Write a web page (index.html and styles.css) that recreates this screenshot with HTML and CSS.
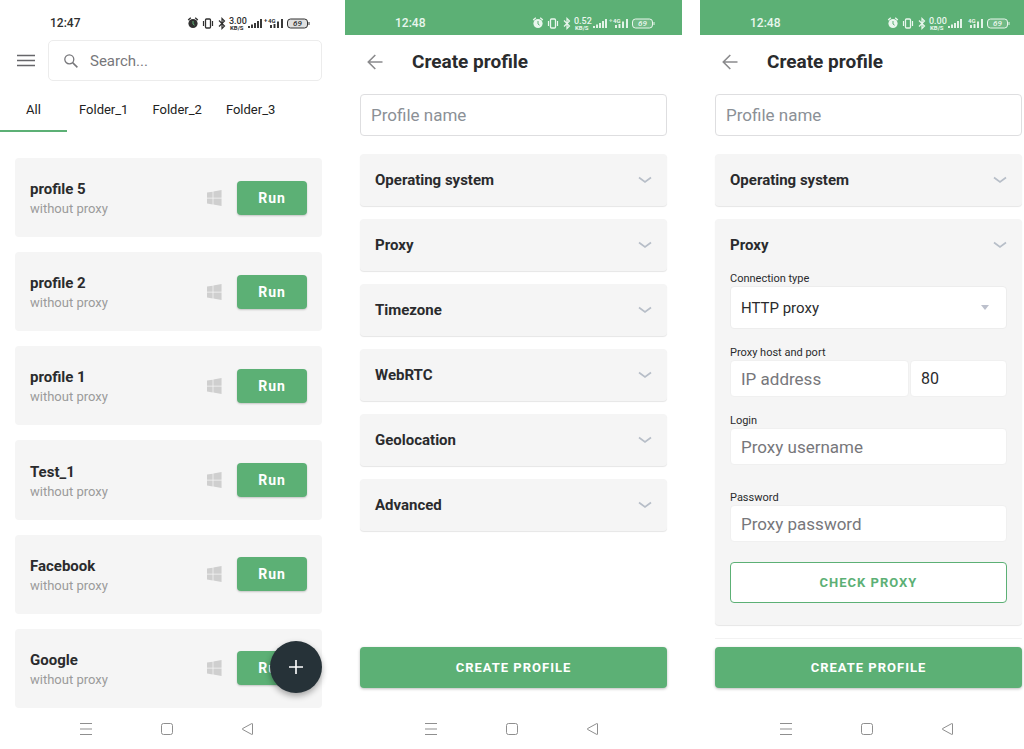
FILE: index.html
```html
<!DOCTYPE html>
<html lang="en">
<head>
<meta charset="utf-8">
<meta name="viewport" content="width=device-width, initial-scale=1">
<title>Profiles</title>
<link rel="stylesheet" href="styles.css">
</head>
<body>
<svg class="sprite" aria-hidden="true">
  <symbol id="status" viewBox="0 0 124 16">
    <g fill="none" stroke="currentColor">
      <circle cx="6" cy="8.5" r="4.6" fill="currentColor" stroke="none"/>
      <path d="M1.2 5 3.8 2.8M10.8 5 8.2 2.8" stroke-width="1.4"/>
      <path class="hands" d="M6 6v3l1.6 1.2" stroke-width="1"/>
      <rect x="18.500" y="4" width="5" height="9" rx="1" stroke-width="1.300"/>
      <path d="M16.500 6v5M25.500 6v5" stroke-width="1.200"/>
      <path d="M32 5.500 37.500 11 35 13.500V3.500L37.500 6 32 11.500" stroke-width="1.200"/>
      <path d="M62 11v2M65 9.500V13M68 8v5M71 6v7M74 4v9" stroke-width="1.900"/>
      <path d="M84 10v3M87.500 9v4M91 6.500V13M95 4v9" stroke-width="1.900"/>
      <path class="cell" d="M103.500 4h14q3 0 3 3v3q0 3-3 3h-14q-3 0-3-3V7q0-3 3-3z"/>
      <path d="M122 7v3"/>
    </g>
  </symbol>
  <symbol id="windows" viewBox="0 0 16 18">
    <path fill="currentColor" d="M0 3.200 6 2.200V8.600H0zM6.800 2 15.500.4V8.600H6.800zM0 9.400H6V15.800L0 14.800zM6.800 9.400H15.500V17.600L6.800 16z"/>
  </symbol>
  <symbol id="chevron" viewBox="0 0 14 8">
    <path d="M1 1.500 7 6 13 1.500" fill="none" stroke="currentColor" stroke-width="1.600"/>
  </symbol>
  <symbol id="back" viewBox="0 0 16 16">
    <path d="M15.500 8H1.500M8.300 1 1.300 8l7 7" fill="none" stroke="currentColor" stroke-width="1.600"/>
  </symbol>
  <symbol id="recents" viewBox="0 0 14 14">
    <path d="M1 1.500H13M1 7H13M1 12.500H13" fill="none" stroke="currentColor"/>
  </symbol>
  <symbol id="home" viewBox="0 0 14 14">
    <rect x="1.500" y="1.500" width="11" height="11" rx="2" fill="none" stroke="currentColor"/>
  </symbol>
  <symbol id="return" viewBox="0 0 14 14">
    <path d="M11.500 2v10q0 .8-.8.400L1.500 7.400q-.6-.4 0-.8L10.700 1.600q.8-.4.8.4z" fill="none" stroke="currentColor"/>
  </symbol>
</svg>

<main class="screens">
  <section class="phone">
    <header class="status status-light">
      <time>12:47</time>
      <svg class="status-icons" viewBox="0 0 124 16"><use href="#status"/><text x="42" y="9" class="speed">3.00</text><text x="43" y="15" class="unit">KB/S</text><text x="77" y="7" class="unit">+</text><text x="81" y="8" class="unit">4G</text><text x="106" y="11" class="level">69</text></svg>
    </header>
    <div class="search-row">
      <button class="icon-button menu" aria-label="Menu"><svg viewBox="0 0 18 14"><path d="M0 1.500H18M0 6.500H18M0 11.500H18" stroke="currentColor" stroke-width="1.600"/></svg></button>
      <label class="search">
        <svg viewBox="0 0 14 14"><circle cx="5.300" cy="5.300" r="4.500" fill="none" stroke="currentColor" stroke-width="1.300"/><path d="M8.600 8.600 13.400 13.400" stroke="currentColor" stroke-width="1.500"/></svg>
        <input type="search" placeholder="Search..." aria-label="Search">
      </label>
    </div>
    <nav class="tabs">
      <button class="tab tab-active">All</button>
      <button class="tab">Folder_1</button>
      <button class="tab">Folder_2</button>
      <button class="tab">Folder_3</button>
    </nav>
    <div class="profiles">
      <article class="profile"><div class="profile-text"><h2>profile 5</h2><p>without proxy</p></div><svg class="os"><use href="#windows"/></svg><button class="run">Run</button></article>
      <article class="profile"><div class="profile-text"><h2>profile 2</h2><p>without proxy</p></div><svg class="os"><use href="#windows"/></svg><button class="run">Run</button></article>
      <article class="profile"><div class="profile-text"><h2>profile 1</h2><p>without proxy</p></div><svg class="os"><use href="#windows"/></svg><button class="run">Run</button></article>
      <article class="profile"><div class="profile-text"><h2>Test_1</h2><p>without proxy</p></div><svg class="os"><use href="#windows"/></svg><button class="run">Run</button></article>
      <article class="profile"><div class="profile-text"><h2>Facebook</h2><p>without proxy</p></div><svg class="os"><use href="#windows"/></svg><button class="run">Run</button></article>
      <article class="profile"><div class="profile-text"><h2>Google</h2><p>without proxy</p></div><svg class="os"><use href="#windows"/></svg><button class="run">Run</button></article>
      <button class="fab" aria-label="Add profile"><svg viewBox="0 0 14 14"><path d="M7 0V14M0 7H14" stroke="currentColor" stroke-width="1.600"/></svg></button>
    </div>
    <footer class="system-nav"><svg><use href="#recents"/></svg><svg><use href="#home"/></svg><svg><use href="#return"/></svg></footer>
  </section>

  <section class="phone phone-middle">
    <header class="status">
      <time>12:48</time>
      <svg class="status-icons" viewBox="0 0 124 16"><use href="#status"/><text x="42" y="9" class="speed">0.52</text><text x="43" y="15" class="unit">KB/S</text><text x="77" y="7" class="unit">÷</text><text x="81" y="8" class="unit">4G</text><text x="106" y="11" class="level">69</text></svg>
    </header>
    <div class="title-bar">
      <button class="icon-button back" aria-label="Back"><svg><use href="#back"/></svg></button>
      <h1>Create profile</h1>
    </div>
    <form class="form">
      <input class="name" type="text" placeholder="Profile name" aria-label="Profile name">
      <div class="sections">
        <section class="panel"><button type="button" class="panel-head">Operating system<svg><use href="#chevron"/></svg></button></section>
        <section class="panel"><button type="button" class="panel-head">Proxy<svg><use href="#chevron"/></svg></button></section>
        <section class="panel"><button type="button" class="panel-head">Timezone<svg><use href="#chevron"/></svg></button></section>
        <section class="panel"><button type="button" class="panel-head">WebRTC<svg><use href="#chevron"/></svg></button></section>
        <section class="panel"><button type="button" class="panel-head">Geolocation<svg><use href="#chevron"/></svg></button></section>
        <section class="panel"><button type="button" class="panel-head">Advanced<svg><use href="#chevron"/></svg></button></section>
      </div>
      <button type="button" class="create">CREATE PROFILE</button>
    </form>
    <footer class="system-nav"><svg><use href="#recents"/></svg><svg><use href="#home"/></svg><svg><use href="#return"/></svg></footer>
  </section>

  <section class="phone phone-last">
    <header class="status">
      <time>12:48</time>
      <svg class="status-icons" viewBox="0 0 124 16"><use href="#status"/><text x="42" y="9" class="speed">0.00</text><text x="43" y="15" class="unit">KB/S</text><text x="81" y="8" class="unit">4G</text><text x="106" y="11" class="level">69</text></svg>
    </header>
    <div class="title-bar">
      <button class="icon-button back" aria-label="Back"><svg><use href="#back"/></svg></button>
      <h1>Create profile</h1>
    </div>
    <form class="form">
      <input class="name" type="text" placeholder="Profile name" aria-label="Profile name">
      <div class="sections">
        <section class="panel"><button type="button" class="panel-head">Operating system<svg><use href="#chevron"/></svg></button></section>
        <section class="panel">
          <button type="button" class="panel-head">Proxy<svg><use href="#chevron"/></svg></button>
          <div class="panel-body">
            <div class="field">
              <label for="type">Connection type</label>
              <div class="select-box">
                <select id="type"><option>HTTP proxy</option></select>
                <svg class="caret" viewBox="0 0 8 5"><path d="M0 0H8L4 5z" fill="currentColor"/></svg>
              </div>
            </div>
            <div class="field">
              <label for="host">Proxy host and port</label>
              <div class="host-row">
                <input id="host" type="text" placeholder="IP address">
                <input class="port" type="text" value="80" aria-label="Port">
              </div>
            </div>
            <div class="field field-login">
              <label for="login">Login</label>
              <input id="login" type="text" placeholder="Proxy username">
            </div>
            <div class="field">
              <label for="password">Password</label>
              <input id="password" type="password" placeholder="Proxy password">
            </div>
            <button type="button" class="check">CHECK PROXY</button>
          </div>
        </section>
        <div class="next-edge"></div>
      </div>
      <button type="button" class="create">CREATE PROFILE</button>
    </form>
    <footer class="system-nav"><svg><use href="#recents"/></svg><svg><use href="#home"/></svg><svg><use href="#return"/></svg></footer>
  </section>
</main>
</body>
</html>
```
FILE: styles.css
```css
* {
  box-sizing: border-box;
}

body {
  margin: 0;
  background: #fff;
  color: #2a2b2d;
  font-family: Roboto, "Liberation Sans", sans-serif;
}

h1, h2, p {
  margin: 0;
}

button, input, select {
  font: inherit;
  color: inherit;
  margin: 0;
  outline: 0;
}

button {
  padding: 0;
  border: 0;
  background: none;
}

svg {
  display: block;
  flex: none;
}

.sprite {
  position: absolute;
  width: 0;
  height: 0;
}

/* Three screens side by side; the last one runs off the right edge. */
.screens {
  display: grid;
  grid-template-columns: 337fr 8fr 337fr 18fr 324fr;
  min-height: 100vh;
}

.phone {
  display: flex;
  flex-direction: column;
  min-width: 0;
}

.phone-middle {
  grid-column: 3;
}

.phone-last {
  grid-column: 5;
}

/* Status bar */
.status {
  display: flex;
  align-items: center;
  justify-content: space-between;
  height: 35px;
  padding: 10px 26px 0 50px;
  background: #5cb075;
  color: #e9f6ed;
  font-size: 12px;
  font-weight: 500;
}

.status-light {
  background: #fff;
  color: #303030;
}

.phone-last .status {
  padding-right: 13px;
}

.status-icons {
  width: 124px;
  height: 16px;
  fill: currentColor;
}

.hands {
  stroke: #5cb075;
}

.cell {
  fill: currentColor;
  fill-opacity: 0.15;
}

.speed {
  font-size: 9px;
  font-weight: 500;
}

.unit {
  font-size: 6px;
  font-weight: 700;
}

.level {
  font-size: 8px;
  font-weight: 500;
  font-style: italic;
}

/* Profile list */
.search-row {
  display: flex;
  align-items: center;
  gap: 13px;
  padding: 5px 15px 0 17px;
}

.menu {
  color: #66666a;
}

.menu svg {
  width: 18px;
  height: 14px;
}

.search {
  display: flex;
  align-items: center;
  flex: 1;
  gap: 12px;
  height: 41px;
  padding: 0 15px;
  border: 1px solid #ececec;
  border-radius: 5px;
  color: #77777b;
}

.search svg {
  width: 14px;
  height: 14px;
}

.search input {
  flex: 1;
  min-width: 0;
  padding: 0;
  border: 0;
  background: none;
  font-size: 15px;
}

::placeholder {
  color: #77777b;
  opacity: 1;
}

.tabs {
  display: flex;
  height: 51px;
}

.tab {
  padding: 8px 12px 0;
  border-bottom: 2px solid transparent;
  color: #222;
  font-size: 13px;
  line-height: 24px;
}

.tab-active {
  min-width: 67px;
  border-color: #5cb075;
}

.profiles {
  position: relative;
  display: grid;
  grid-auto-rows: minmax(79px, 1fr);
  gap: 15px;
  flex: 1;
  padding: 26px 15px 0;
}

.profile {
  display: flex;
  align-items: center;
  gap: 15px;
  padding: 0 15px;
  border-radius: 4px;
  background: #f5f5f5;
}

.profile-text {
  flex: 1;
  padding-top: 2px;
}

.profile h2 {
  font-size: 15px;
  font-weight: 700;
  line-height: 20px;
}

.profile p {
  color: #9b9b9b;
  font-size: 13px;
  line-height: 19px;
}

.os {
  width: 15px;
  height: 18px;
  color: #cfcfcf;
}

.run {
  width: 70px;
  height: 34px;
  border-radius: 4px;
  background: #5cb075;
  box-shadow: 0 1px 2px #0003;
  color: #fff;
  font-size: 14px;
  font-weight: 700;
  letter-spacing: 1px;
}

.fab {
  position: absolute;
  right: 15px;
  bottom: 15px;
  display: grid;
  place-items: center;
  width: 52px;
  height: 52px;
  border-radius: 50%;
  background: #263238;
  box-shadow: 0 3px 6px #0005;
  color: #fff;
}

.fab svg {
  width: 14px;
  height: 14px;
}

/* Android navigation */
.system-nav {
  display: flex;
  align-items: center;
  gap: 67px;
  height: 41px;
  padding-left: 79px;
  color: #8f8f8f;
}

.system-nav svg {
  width: 14px;
  height: 14px;
}

/* Create profile form */
.title-bar {
  display: flex;
  align-items: center;
  gap: 29px;
  height: 53px;
  padding-left: 22px;
}

.back {
  color: #8b8b8d;
}

.back svg {
  width: 16px;
  height: 16px;
}

.title-bar h1 {
  font-size: 19px;
  font-weight: 700;
}

.form {
  display: flex;
  flex: 1;
  flex-direction: column;
  padding: 6px 15px 20px;
}

.phone-last .form {
  padding-right: 2px;
}

.name {
  width: 100%;
  height: 42px;
  margin-bottom: 18px;
  padding: 0 10px;
  border: 1px solid #dedee0;
  border-radius: 4px;
  font-size: 17px;
}

.name::placeholder {
  color: #8b9096;
}

.sections {
  display: flex;
  flex: 1;
  flex-direction: column;
  gap: 13px;
}

.panel {
  border-radius: 4px;
  background: #f5f5f5;
  box-shadow: 0 1px 1px #0000001a;
}

.panel-head {
  display: flex;
  align-items: center;
  justify-content: space-between;
  width: 100%;
  height: 52px;
  padding: 0 15px;
  font-size: 15px;
  font-weight: 700;
}

.panel-head svg {
  width: 14px;
  height: 8px;
  color: #b7bec8;
}

.panel-body {
  display: flex;
  flex-direction: column;
  gap: 16px;
  padding: 0 15px 22px;
}

.field label {
  display: block;
  font-size: 11px;
  line-height: 15px;
}

.field-login {
  margin-bottom: 9px;
}

.field input {
  display: block;
  width: 100%;
  min-width: 0;
  height: 37px;
  padding: 0 10px;
  border: 1px solid #f0f0f0;
  border-radius: 4px;
  background: #fff;
  font-size: 17px;
}

.field .port {
  font-size: 16px;
}

.select-box {
  display: grid;
  align-items: center;
}

.select-box select {
  grid-area: 1 / 1;
  width: 100%;
  height: 43px;
  padding: 0 10px;
  border: 1px solid #ededed;
  border-radius: 4px;
  background: #fff;
  font-size: 15px;
  appearance: none;
}

.caret {
  grid-area: 1 / 1;
  justify-self: end;
  width: 8px;
  height: 5px;
  margin-right: 18px;
  color: #bcc0cc;
  pointer-events: none;
}

.host-row {
  display: grid;
  grid-template-columns: 179fr 97fr;
  gap: 1px;
}

.check, .create {
  height: 41px;
  border-radius: 4px;
  font-size: 13px;
  font-weight: 700;
  letter-spacing: 1px;
}

.check {
  margin-top: 4px;
  border: 1px solid #5cb075;
  background: #fff;
  color: #5cb075;
}

.create {
  background: #5cb075;
  box-shadow: 0 1px 3px #0004;
  color: #fff;
}

.next-edge {
  border-top: 1px solid #f2f2f2;
}
```
